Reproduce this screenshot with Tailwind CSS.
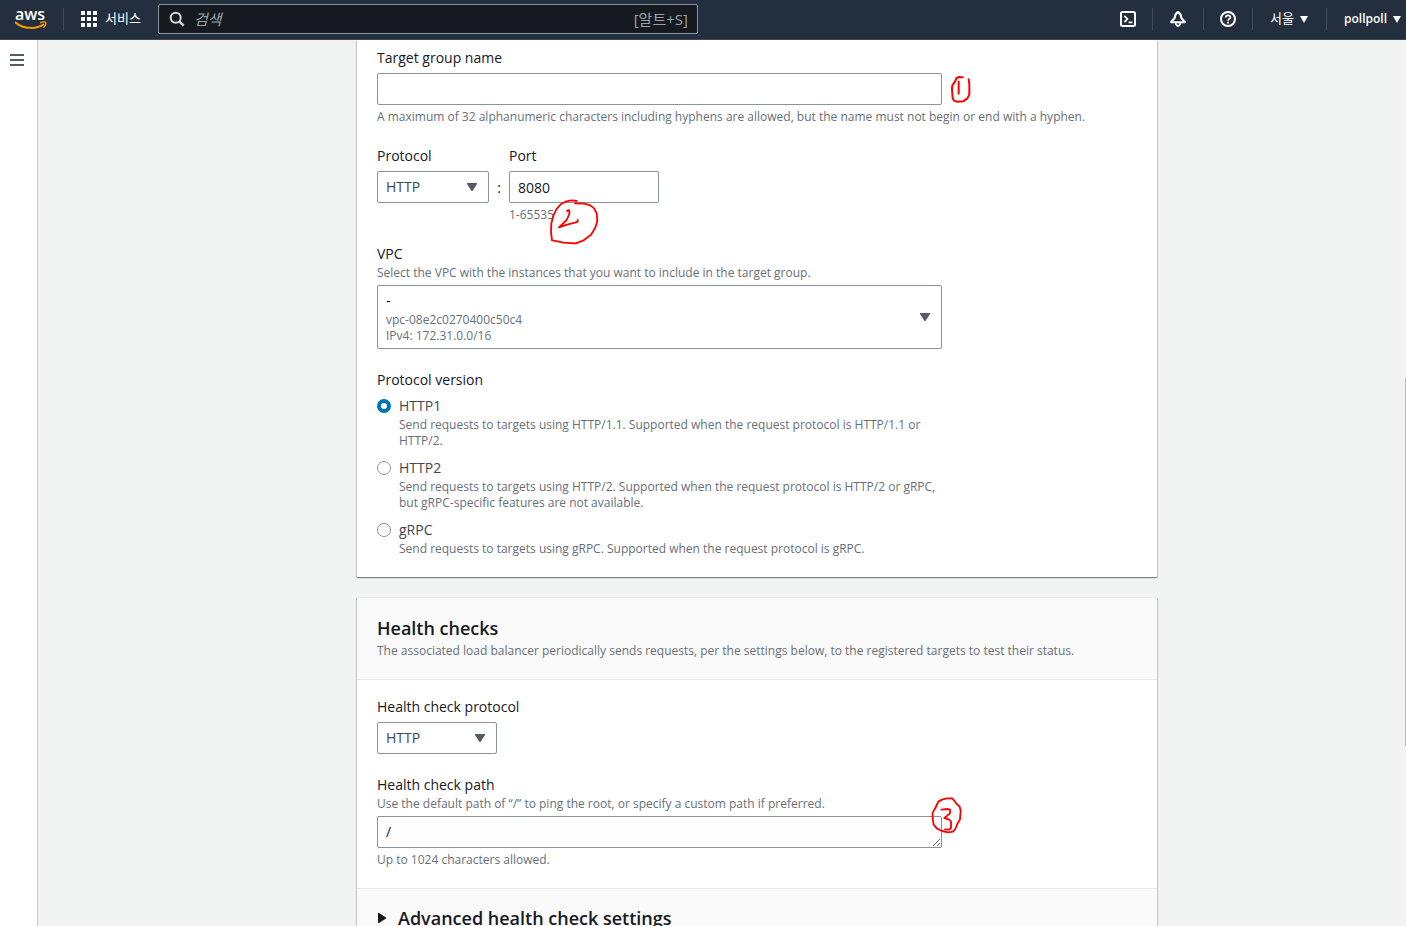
<!DOCTYPE html>
<html lang="ko">
<head>
    <meta charset="UTF-8">
    <meta name="viewport" content="width=device-width, initial-scale=1.0">
    <title>Create target group</title>
    <script src="https://cdn.jsdelivr.net/npm/@tailwindcss/browser@4"></script>
</head>
<body class="h-screen flex flex-col overflow-hidden bg-[#f2f3f3] text-[#16191f] text-sm/[22px] font-['Open_Sans','Noto_Sans_CJK_KR',sans-serif]">

    <!-- Top navigation -->
    <header class="flex items-center h-10 pb-px shrink-0 bg-[#232f3e] border-b border-[#414750] text-white">
        <a href="#" aria-label="AWS" class="block w-8 h-6 ml-[15px]">
            <svg class="w-8 h-6" viewBox="0 0 32 24" fill="none">
                <text x="0" y="13" fill="#fff" font-family="Open Sans" font-size="16" font-weight="600">aws</text>
                <path d="M0.5 15.5C9 22.3 21 22.3 28.3 17.6" stroke="#ff9900" stroke-width="2" stroke-linecap="round"/>
                <path d="M25.5 15.7C28 14.8 30 14.8 30.6 15.4C31.2 16.2 30.3 18.6 28.8 20.3" stroke="#ff9900" stroke-width="1.4" stroke-linecap="round"/>
            </svg>
        </a>
        <div class="w-px h-[22px] ml-4 bg-[#414d5c]"></div>
        <button class="flex items-center gap-2 ml-[17px] text-[13px]/4">
            <svg class="size-4" viewBox="0 0 16 16" fill="currentColor">
                <path d="M0 0h4v4H0zM6 0h4v4H6zM12 0h4v4h-4zM0 6h4v4H0zM6 6h4v4H6zM12 6h4v4h-4zM0 12h4v4H0zM6 12h4v4H6zM12 12h4v4h-4z"/>
            </svg>
            <span class="pb-0.5">서비스</span>
        </button>
        <label class="flex items-center h-[30px] w-[540px] ml-[17px] px-[9px] bg-[#16191f] border border-[#879596] rounded-xs text-[15px] text-[#95a5a6]">
            <svg class="size-4 mx-px shrink-0 text-[#d5dbdb]" viewBox="0 0 16 16" fill="none" stroke="currentColor" stroke-width="2">
                <circle cx="6.7" cy="6.7" r="5"/>
                <path d="M10.3 10.3L14.6 14.6" stroke-width="2.4"/>
            </svg>
            <input type="search" aria-label="검색" placeholder="검색" class="flex-1 min-w-0 ml-2 pb-px outline-none placeholder:italic placeholder:text-[#95a5a6]">
            <span>[알트+S]</span>
        </label>
        <nav class="flex items-center ml-auto text-[13px]/4">
            <button class="px-4" aria-label="CloudShell">
                <svg class="size-4" viewBox="0 0 16 16" fill="none" stroke="currentColor" stroke-width="2">
                    <rect x="1" y="1" width="14" height="14" rx="1.5"/>
                    <path d="M4.3 4.8L7.5 8L4.3 11.2M8.6 11.3h3.8" stroke-width="1.7"/>
                </svg>
            </button>
            <div class="w-px h-[22px] bg-[#414d5c]"></div>
            <button class="px-[17px]" aria-label="Notifications">
                <svg class="size-4" viewBox="0 0 16 16" fill="none" stroke="currentColor" stroke-width="2" stroke-linejoin="round">
                    <path d="M8 1C5.8 2.2 4.8 3.6 4.7 7L1.2 10.8V11.2H14.8V10.8L11.3 7C11.2 3.6 10.2 2.2 8 1Z"/>
                    <path d="M5.8 11.5V13.2L7.2 14.8H8.8L10.2 13.2V11.5" stroke-width="1.7"/>
                </svg>
            </button>
            <div class="w-px h-[22px] bg-[#414d5c]"></div>
            <button class="px-4" aria-label="Help">
                <svg class="size-4" viewBox="0 0 16 16" fill="none" stroke="currentColor" stroke-width="2">
                    <circle cx="8" cy="8" r="7"/>
                    <path d="M5.7 6.5C5.7 3.6 10.4 3.7 10.4 6.4C10.4 8 8 7.8 8 9.8" stroke-width="1.7"/>
                    <path d="M8 10.8v1.8" stroke-width="1.9"/>
                </svg>
            </button>
            <div class="w-px h-[22px] bg-[#414d5c]"></div>
            <button class="flex items-center gap-1.5 pl-[17px] pr-[18px]">
                <span class="pb-0.5">서울</span>
                <svg class="w-2 h-[7px]" viewBox="0 0 8 7" fill="currentColor"><path d="M0 0h8L4 7z"/></svg>
            </button>
            <div class="w-px h-[22px] bg-[#414d5c]"></div>
            <button class="flex items-center gap-1.5 pl-[17px] pr-[5px] text-xs/4 font-semibold">
                pollpoll
                <svg class="w-2 h-[7px]" viewBox="0 0 8 7" fill="currentColor"><path d="M0 0h8L4 7z"/></svg>
            </button>
        </nav>
    </header>

    <div class="relative flex flex-1 min-h-0">
        <aside class="w-[38px] shrink-0 bg-white border-r border-[#c5c9ca]">
            <button aria-label="Open navigation" class="block mt-3.5 ml-2.5">
                <svg class="w-3.5 h-3" viewBox="0 0 14 12" fill="#545b64"><path d="M0 0h14v2H0zM0 5h14v2H0zM0 10h14v2H0z"/></svg>
            </button>
        </aside>

        <main class="flex-1 min-w-0 overflow-hidden pl-[70px]">
            <form class="w-full max-w-[800px] mx-auto flex flex-col gap-5">

                <!-- Basic configuration -->
                <section class="flex flex-col gap-5 px-5 pt-[7px] pb-5 bg-white shadow-[0_1px_1px_0_rgba(0,28,36,0.3),1px_1px_1px_0_rgba(0,28,36,0.15),-1px_1px_1px_0_rgba(0,28,36,0.15)]">
                    <div>
                        <label for="name" class="block">Target group name</label>
                        <div class="relative mt-1 max-w-[565px]">
                            <input id="name" type="text" class="block w-full h-8 px-2 border border-[#879596] rounded-xs bg-white">
                            <svg class="absolute left-full top-0.5 ml-2 w-6 h-[30px]" viewBox="0 0 72 90" fill="none" stroke="#f00" stroke-width="6" stroke-linecap="round" stroke-linejoin="round">
                                <path d="M38 7L27 6L20 9L15 20L7 31L6 44L8 69L12 77L20 80L40 79L52 70L58 58V28L56 13"/>
                                <path d="M26 20V56"/>
                            </svg>
                        </div>
                        <p class="mt-1 text-xs/4 text-[#687078]">A maximum of 32 alphanumeric characters including hyphens are allowed, but the name must not begin or end with a hyphen.</p>
                    </div>

                    <div class="flex">
                        <div>
                            <label for="protocol" class="block">Protocol</label>
                            <div class="relative mt-1 w-28">
                                <select id="protocol" class="block w-full h-8 px-2 border border-[#879596] rounded-xs bg-white appearance-none text-[#414750]">
                                    <option>HTTP</option>
                                    <option>HTTPS</option>
                                </select>
                                <svg class="absolute right-3 top-3 w-2.5 h-2 pointer-events-none" viewBox="0 0 10 8" fill="#545b64"><path d="M0 0h10v1L5.5 8h-1L0 1z"/></svg>
                            </div>
                        </div>
                        <span class="w-5 mt-8 text-center">:</span>
                        <div>
                            <label for="port" class="block">Port</label>
                            <div class="relative mt-1 w-[150px]">
                                <input id="port" type="text" value="8080" class="block w-full h-8 px-2 border border-[#879596] rounded-xs bg-white">
                                <svg class="absolute left-10 top-[27px] w-[50px] h-12 z-10" viewBox="0 0 150 144" fill="none" stroke="#f00" stroke-width="5.5" stroke-linecap="round" stroke-linejoin="round">
                                    <path d="M83 9L68 7L52 10L36 18L22 34L13 53L7 76L6 103L9 127L26 130L43 134L80 136L104 127L126 110L138 91L145 70L143 46L136 32L124 22L106 17L78 16"/>
                                    <path d="M54 39L58 36L61 38V48L53 66L30 88L54 80L78 74L86 71V66"/>
                                </svg>
                            </div>
                            <p class="mt-1 text-xs/4 text-[#687078]">1-65535</p>
                        </div>
                    </div>

                    <div>
                        <label for="vpc" class="block">VPC</label>
                        <p class="text-xs/4 text-[#687078]">Select the VPC with the instances that you want to include in the target group.</p>
                        <button id="vpc" type="button" aria-haspopup="listbox" class="flex items-center justify-between mt-1 w-full max-w-[565px] h-16 pl-2 pr-[11px] border border-[#879596] rounded-xs bg-white text-left">
                            <span>
                                <span class="block">-</span>
                                <span class="block text-xs/4 text-[#687078]">vpc-08e2c0270400c50c4</span>
                                <span class="block text-xs/4 text-[#687078]">IPv4: 172.31.0.0/16</span>
                            </span>
                            <svg class="w-2.5 h-2" viewBox="0 0 10 8" fill="#545b64"><path d="M0 0h10v1L5.5 8h-1L0 1z"/></svg>
                        </button>
                    </div>

                    <fieldset>
                        <legend>Protocol version</legend>
                        <div class="flex flex-col gap-2 mt-1 max-w-[565px]">
                            <label class="grid grid-cols-[14px_1fr] gap-x-2 items-center">
                                <input type="radio" name="version" checked class="size-3.5 appearance-none rounded-full border border-[#879596] bg-white checked:border-4 checked:border-[#0073bb]">
                                <span class="text-[#414750]">HTTP1</span>
                                <span class="col-start-2 text-xs/4 text-[#687078]">Send requests to targets using HTTP/1.1. Supported when the request protocol is HTTP/1.1 or HTTP/2.</span>
                            </label>
                            <label class="grid grid-cols-[14px_1fr] gap-x-2 items-center">
                                <input type="radio" name="version" class="size-3.5 appearance-none rounded-full border border-[#879596] bg-white checked:border-4 checked:border-[#0073bb]">
                                <span class="text-[#414750]">HTTP2</span>
                                <span class="col-start-2 text-xs/4 text-[#687078]">Send requests to targets using HTTP/2. Supported when the request protocol is HTTP/2 or gRPC, but gRPC-specific features are not available.</span>
                            </label>
                            <label class="grid grid-cols-[14px_1fr] gap-x-2 items-center">
                                <input type="radio" name="version" class="size-3.5 appearance-none rounded-full border border-[#879596] bg-white checked:border-4 checked:border-[#0073bb]">
                                <span class="text-[#414750]">gRPC</span>
                                <span class="col-start-2 text-xs/4 text-[#687078]">Send requests to targets using gRPC. Supported when the request protocol is gRPC.</span>
                            </label>
                        </div>
                    </fieldset>
                </section>

                <!-- Health checks -->
                <section class="bg-white shadow-[0_1px_1px_0_rgba(0,28,36,0.3),1px_1px_1px_0_rgba(0,28,36,0.15),-1px_1px_1px_0_rgba(0,28,36,0.15)]">
                    <div class="px-5 pt-[19px] pb-5 bg-[#fafafa] border-y border-[#eaeded]">
                        <h2 class="text-lg/[22px] font-semibold">Health checks</h2>
                        <p class="mt-1 text-xs/4 text-[#687078]">The associated load balancer periodically sends requests, per the settings below, to the registered targets to test their status.</p>
                    </div>
                    <div class="flex flex-col gap-5 px-5 pt-4 pb-5">
                        <div>
                            <label for="hc-protocol" class="block">Health check protocol</label>
                            <div class="relative mt-1 w-[120px]">
                                <select id="hc-protocol" class="block w-full h-8 px-2 border border-[#879596] rounded-xs bg-white appearance-none text-[#414750]">
                                    <option>HTTP</option>
                                    <option>HTTPS</option>
                                </select>
                                <svg class="absolute right-3 top-3 w-2.5 h-2 pointer-events-none" viewBox="0 0 10 8" fill="#545b64"><path d="M0 0h10v1L5.5 8h-1L0 1z"/></svg>
                            </div>
                        </div>
                        <div>
                            <label for="hc-path" class="block">Health check path</label>
                            <p class="text-xs/4 text-[#687078]">Use the default path of “/” to ping the root, or specify a custom path if preferred.</p>
                            <div class="relative mt-1 max-w-[565px]">
                                <textarea id="hc-path" rows="1" class="block w-full h-8 px-2 py-1 border border-[#879596] rounded-xs bg-white resize-y overflow-hidden">/</textarea>
                                <svg class="absolute -right-5 -top-5 w-8 h-[38px]" viewBox="0 0 96 114" fill="none" stroke="#f00" stroke-width="5.5" stroke-linecap="round" stroke-linejoin="round">
                                    <path d="M69 10L64 7L50 7L36 11L25 17L16 36L8 50V68L11 86L21 98L36 105L54 109L69 107L76 99L82 84L90 70L92 44L89 32L80 24L72 13L66 7"/>
                                    <path d="M34 41L52 39L60 41V52L43 66L56 70L63 76L63 96L58 101L45 100"/>
                                </svg>
                            </div>
                            <p class="mt-1 text-xs/4 text-[#687078]">Up to 1024 characters allowed.</p>
                        </div>
                    </div>
                    <div class="px-5 py-[18px] bg-[#fafafa] border-t border-[#eaeded]">
                        <button type="button" aria-expanded="false" class="flex items-center gap-3 pl-px text-lg/[22px] font-semibold">
                            <svg class="w-2 h-2.5" viewBox="0 0 8 10" fill="currentColor"><path d="M0 0h1l7 4.5v1L1 10H0z"/></svg>
                            Advanced health check settings
                        </button>
                    </div>
                </section>
            </form>
        </main>

        <!-- Scroll position marker -->
        <div class="absolute right-0 top-[338px] w-px h-[368px] bg-[#b9baba]"></div>
    </div>
</body>
</html>
